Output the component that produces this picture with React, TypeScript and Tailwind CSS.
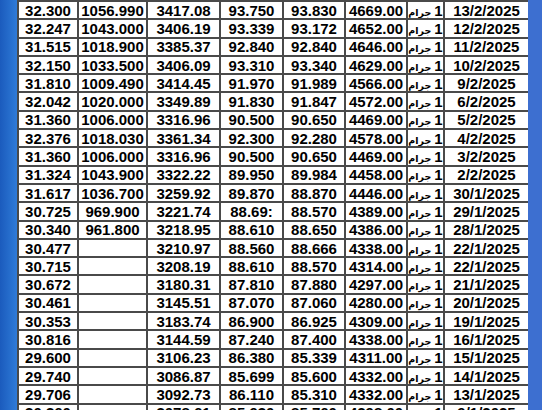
const rows: string[][] = [
  ["32.300", "1056.990", "3417.08", "93.750", "93.830", "4669.00", "13/2/2025"],
  ["32.247", "1043.000", "3406.19", "93.339", "93.172", "4652.00", "12/2/2025"],
  ["31.515", "1018.900", "3385.37", "92.840", "92.840", "4646.00", "11/2/2025"],
  ["32.150", "1033.500", "3406.09", "93.310", "93.340", "4629.00", "10/2/2025"],
  ["31.810", "1009.490", "3414.45", "91.970", "91.989", "4566.00", "9/2/2025"],
  ["32.042", "1020.000", "3349.89", "91.830", "91.847", "4572.00", "6/2/2025"],
  ["31.360", "1006.000", "3316.96", "90.500", "90.650", "4469.00", "5/2/2025"],
  ["32.376", "1018.030", "3361.34", "92.300", "92.280", "4578.00", "4/2/2025"],
  ["31.360", "1006.000", "3316.96", "90.500", "90.650", "4469.00", "3/2/2025"],
  ["31.324", "1043.900", "3322.22", "89.950", "89.984", "4458.00", "2/2/2025"],
  ["31.617", "1036.700", "3259.92", "89.870", "88.870", "4446.00", "30/1/2025"],
  ["30.725", "969.900", "3221.74", "88.69:", "88.570", "4389.00", "29/1/2025"],
  ["30.340", "961.800", "3218.95", "88.610", "88.650", "4386.00", "28/1/2025"],
  ["30.477", "", "3210.97", "88.560", "88.666", "4338.00", "22/1/2025"],
  ["30.715", "", "3208.19", "88.610", "88.570", "4314.00", "22/1/2025"],
  ["30.672", "", "3180.31", "87.810", "87.880", "4297.00", "21/1/2025"],
  ["30.461", "", "3145.51", "87.070", "87.060", "4280.00", "20/1/2025"],
  ["30.353", "", "3183.74", "86.900", "86.925", "4309.00", "19/1/2025"],
  ["30.816", "", "3144.59", "87.240", "87.400", "4338.00", "16/1/2025"],
  ["29.600", "", "3106.23", "86.380", "85.339", "4311.00", "15/1/2025"],
  ["29.740", "", "3086.87", "85.699", "85.600", "4332.00", "14/1/2025"],
  ["29.706", "", "3092.73", "86.110", "85.310", "4332.00", "13/1/2025"],
  ["30.360", "", "3078.61", "85.930", "85.760", "4298.00", "9/1/2025"],
];

const widths = ["w-[60px]", "w-[69px]", "w-[73px]", "w-[63px]", "w-[62px]", "w-[62px]", "w-[37px]", "w-[85px]"];

const cell = "h-[18.3px] border-2 border-[#4a4a4a] p-0 text-center align-middle leading-none overflow-hidden";

export default function App() {
  return (
    <div className="flex h-[410px] w-[542px] overflow-hidden bg-white font-['Liberation_Sans',Arial,sans-serif] text-[15px] font-bold text-black">
      <div className="w-[17px] shrink-0 bg-gradient-to-r from-[#1b5bbd] to-[#2f7bd8]" />
      <div className="w-[511px] shrink-0 overflow-hidden">
        <table className="w-[511px] table-fixed border-collapse">
          <colgroup>
            {widths.map((w, i) => (
              <col key={i} className={w} />
            ))}
          </colgroup>
          <tbody>
            {rows.map((r, i) => (
              <tr key={i}>
                <td className={cell}>{r[0]}</td>
                <td className={cell}>{r[1]}</td>
                <td className={cell}>{r[2]}</td>
                <td className={cell}>{r[3]}</td>
                <td className={cell}>{r[4]}</td>
                <td className={cell}>{r[5]}</td>
                <td className={cell + " whitespace-nowrap"} dir="rtl">
                  <span>1</span>
                  <span className="mr-[3px] font-['DejaVu_Sans',sans-serif] text-[9.5px]">جرام</span>
                </td>
                <td className={cell}>{r[6]}</td>
              </tr>
            ))}
          </tbody>
        </table>
      </div>
      <div className="flex-1 bg-[#3d6fd0]" />
    </div>
  );
}
